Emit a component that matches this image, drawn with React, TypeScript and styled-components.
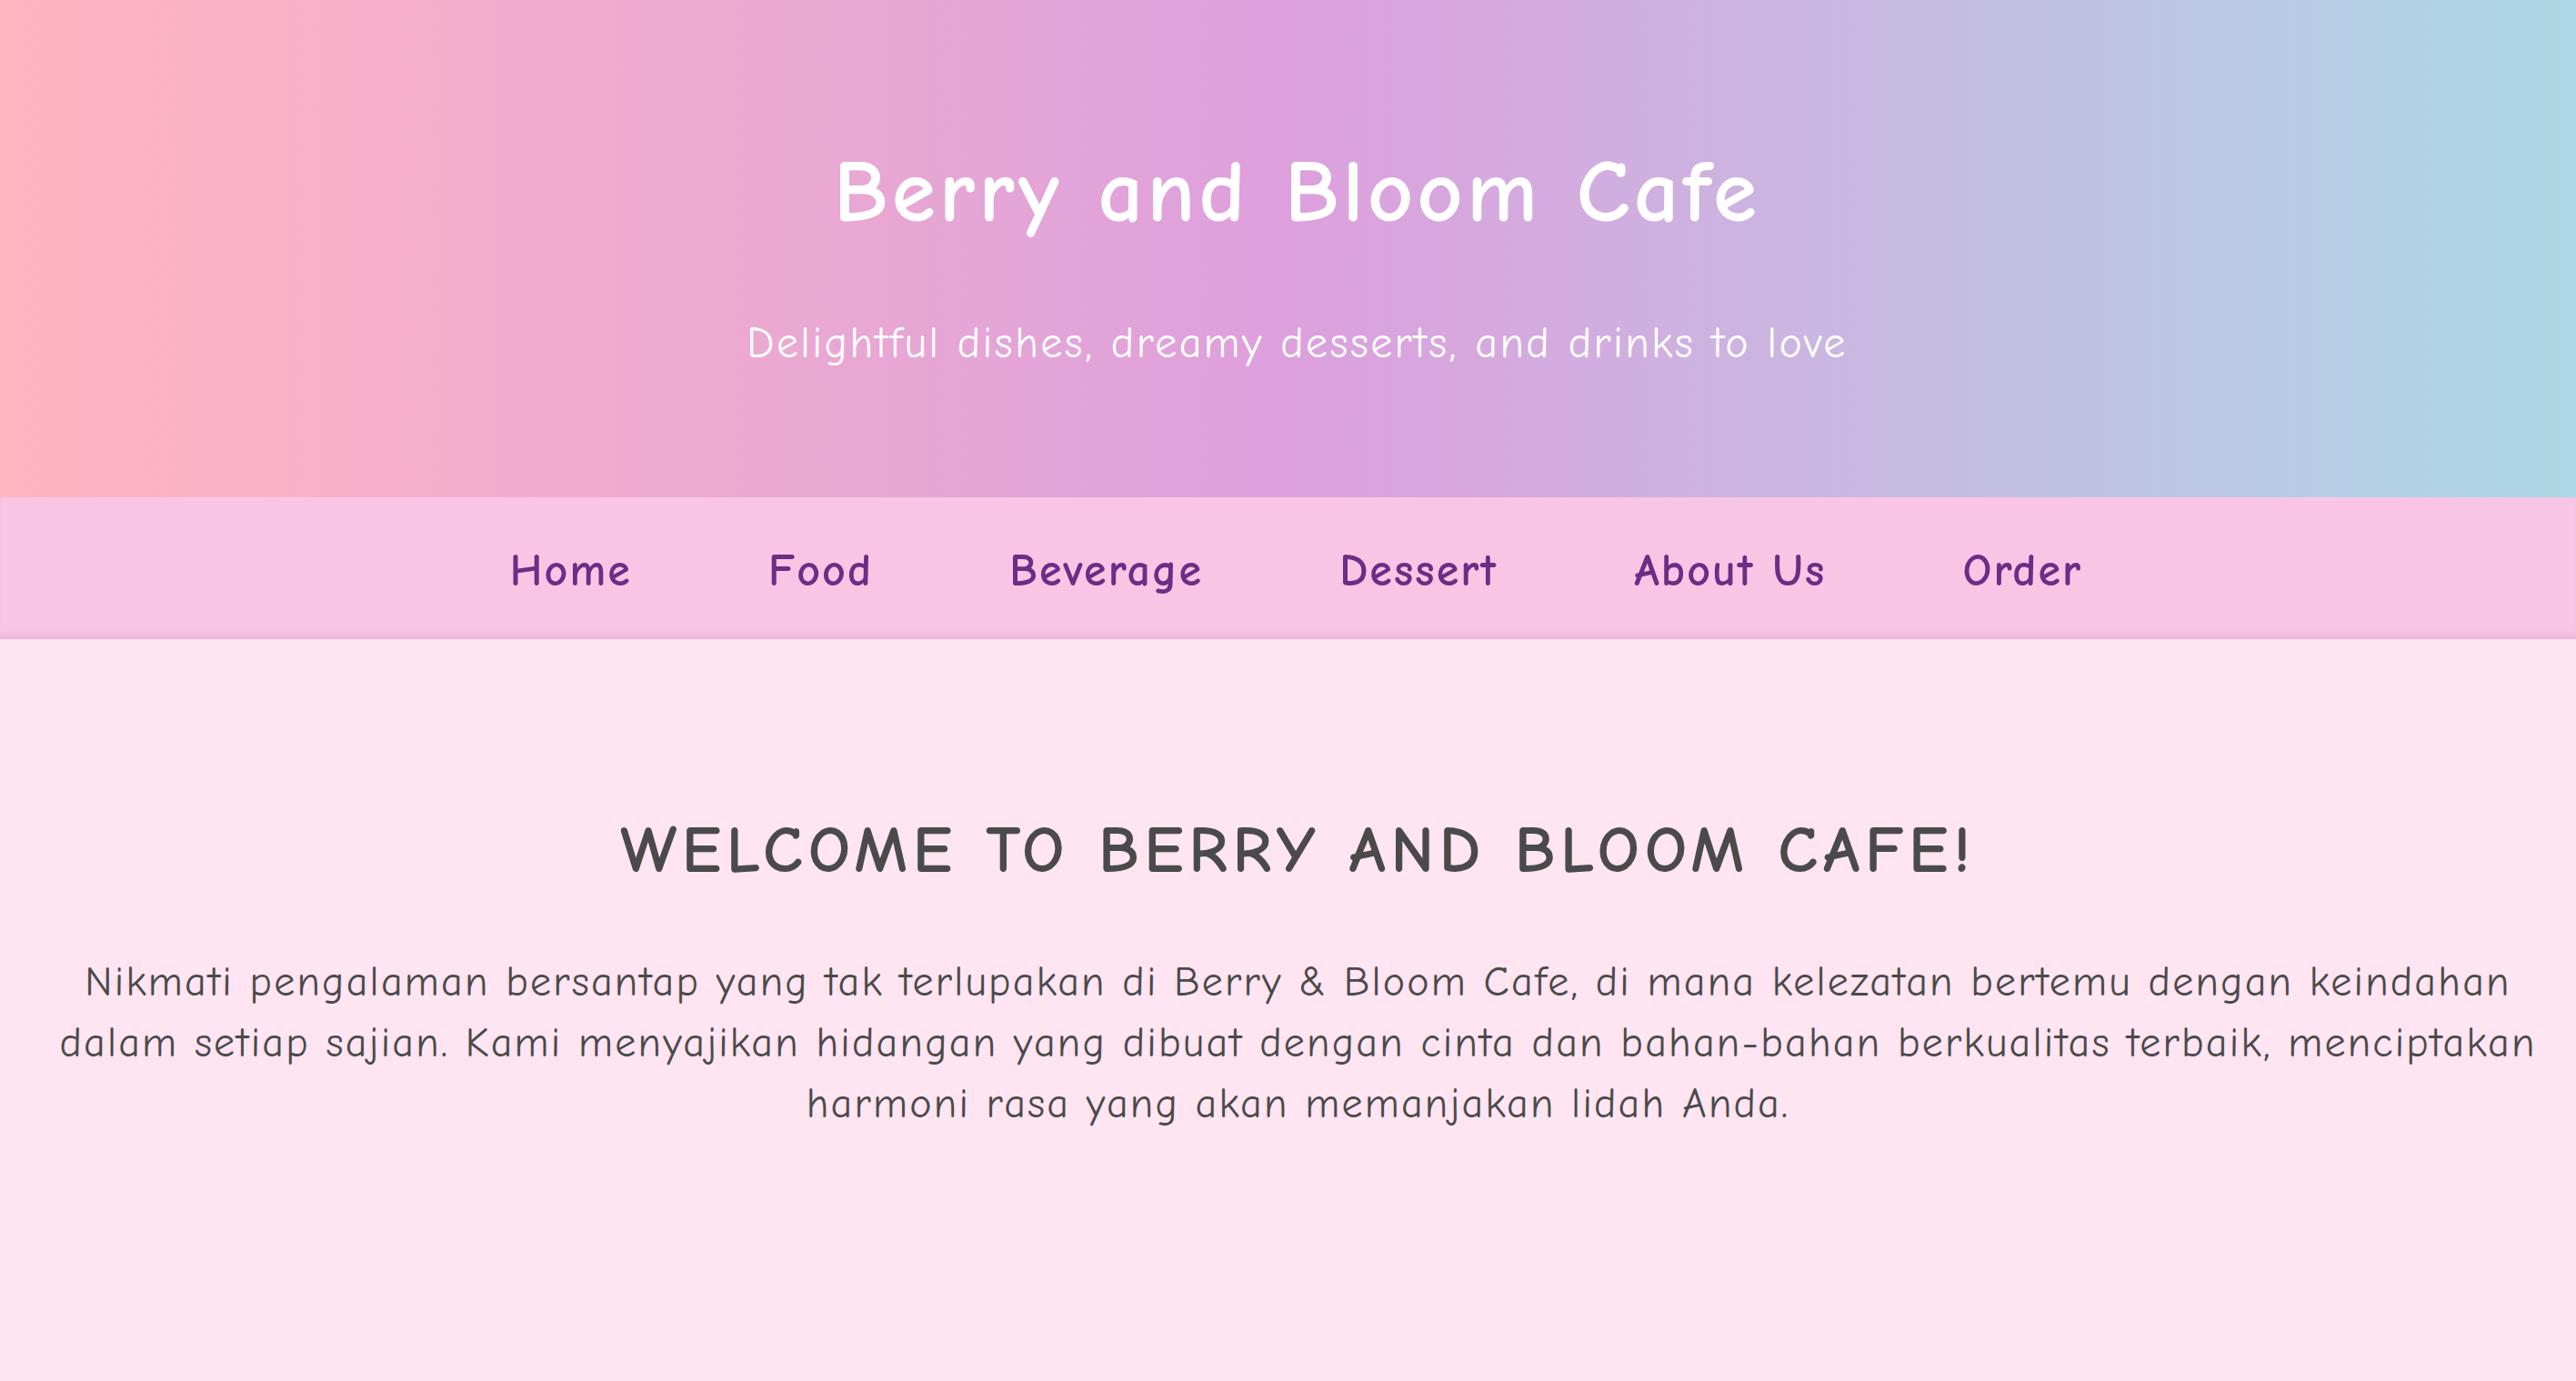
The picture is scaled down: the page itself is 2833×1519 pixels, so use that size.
import React from "react";
import styled, { createGlobalStyle } from "styled-components";

const Global = createGlobalStyle`
  * { box-sizing: border-box; }
  html, body { margin: 0; padding: 0; }
  body {
    background: #ffe4f1;
    font-family: "Comic Sans MS", "Comic Neue", "DejaVu Sans", sans-serif;
    color: #4a4a4a;
  }
`;

const Page = styled.div`
  min-height: 1519px;
  background: #ffe4f1;
`;

const Header = styled.header`
  height: 547px;
  background: linear-gradient(to right, #ffb6c1, #dda0dd, #add8e6);
  display: flex;
  flex-direction: column;
  align-items: center;
  padding: 141px 0 0 20px;
  color: #ffffff;
`;

const Title = styled.h1`
  margin: 0;
  font-size: 98px;
  line-height: 142px;
  font-weight: 700;
  letter-spacing: 4px;
`;

const Tagline = styled.p`
  margin: 60px 0 0;
  font-size: 48px;
  line-height: 70px;
  letter-spacing: 2.4px;
`;

const Nav = styled.nav`
  height: 156px;
  background: #f8c6e4;
  box-shadow: inset 0 -8px 10px -6px rgba(160, 60, 130, 0.18);
  display: flex;
  justify-content: center;
  align-items: center;
  gap: 150px;
  padding: 5px 0 0 18px;
`;

const NavLink = styled.a`
  color: #6b2d86;
  font-weight: 700;
  font-size: 50px;
  line-height: 74px;
  letter-spacing: 2.1px;
  text-decoration: none;
`;

const Main = styled.main`
  padding: 179px 40px 0 62px;
  text-align: center;
`;

const Heading = styled.h2`
  margin: 0;
  font-size: 73px;
  line-height: 107px;
  font-weight: 700;
  letter-spacing: 5.7px;
  color: #4a4a4a;
`;

const Lead = styled.p`
  margin: 58px 0 0;
  font-size: 46px;
  line-height: 67px;
  letter-spacing: 2.2px;
  color: #4a4a4a;
`;

const links = ["Home", "Food", "Beverage", "Dessert", "About Us", "Order"];

export default function App() {
  return (
    <Page>
      <Global />
      <Header>
        <Title>Berry and Bloom Cafe</Title>
        <Tagline>Delightful dishes, dreamy desserts, and drinks to love</Tagline>
      </Header>
      <Nav>
        {links.map((l) => (
          <NavLink key={l} href="#">
            {l}
          </NavLink>
        ))}
      </Nav>
      <Main>
        <Heading>WELCOME TO BERRY AND BLOOM CAFE!</Heading>
        <Lead>
          Nikmati pengalaman bersantap yang tak terlupakan di Berry &amp; Bloom Cafe, di mana kelezatan bertemu dengan keindahan
          <br />
          dalam setiap sajian. Kami menyajikan hidangan yang dibuat dengan cinta dan bahan-bahan berkualitas terbaik, menciptakan
          <br />
          harmoni rasa yang akan memanjakan lidah Anda.
        </Lead>
      </Main>
    </Page>
  );
}
